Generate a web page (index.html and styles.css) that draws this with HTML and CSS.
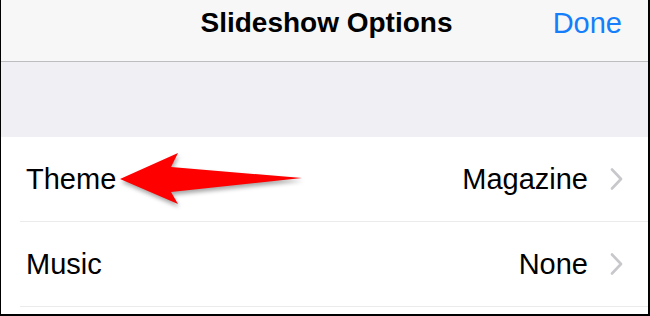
FILE: index.html
```html
<!DOCTYPE html>
<html>
<head>
<meta charset="utf-8">
<link rel="stylesheet" href="styles.css">
</head>
<body>
<div class="frame">
  <header class="nav">
    <div class="title">Slideshow Options</div>
    <div class="done">Done</div>
  </header>
  <div class="band"></div>
  <div class="list">
    <div class="row">
      <span class="label">Theme</span>
      <span class="value">Magazine</span>
      <svg class="chev" width="13" height="22" viewBox="0 0 13 22"><path d="M2 1.5 L11 11 L2 20.5" fill="none" stroke="#c7c7cc" stroke-width="2.6" stroke-linecap="round" stroke-linejoin="round"/></svg>
      <svg class="arrow" width="200" height="60" viewBox="0 0 200 60"><path d="M4 27 L62 1 L55 15 L186 26 L55 40 L62 52 Z" fill="#ff0000"/></svg>
    </div>
    <div class="row">
      <span class="label">Music</span>
      <span class="value">None</span>
      <svg class="chev" width="13" height="22" viewBox="0 0 13 22"><path d="M2 1.5 L11 11 L2 20.5" fill="none" stroke="#c7c7cc" stroke-width="2.6" stroke-linecap="round" stroke-linejoin="round"/></svg>
    </div>
  </div>
</div>
</body>
</html>
```
FILE: styles.css
```css
html, body {
  margin: 0;
  padding: 0;
  width: 650px;
  height: 316px;
  overflow: hidden;
  background: #fff;
}
.frame {
  box-sizing: border-box;
  width: 650px;
  height: 316px;
  border-left: 1px solid #000;
  border-right: 2px solid #000;
  border-bottom: 2px solid #000;
  font-family: "Liberation Sans", Arial, sans-serif;
  color: #000;
  display: flex;
  flex-direction: column;
  background: #fff;
}
.nav {
  height: 61px;
  border-bottom: 1px solid #bdbcc1;
  background: #f7f7f8;
  position: relative;
  flex: none;
}
.title {
  position: absolute;
  left: 0;
  right: 0;
  top: 7px;
  text-align: center;
  font-weight: bold;
  font-size: 28px;
  line-height: 32px;
  padding-left: 4px;
}
.done {
  position: absolute;
  right: 26px;
  top: 7px;
  font-size: 29px;
  line-height: 32px;
  color: #157efb;
}
.band {
  height: 75px;
  background: #efeff4;
  flex: none;
}
.list {
  background: #fff;
}
.row {
  position: relative;
  height: 84px;
  margin-left: 19px;
  padding-right: 25px;
  border-bottom: 1px solid #ebebed;
  display: flex;
  align-items: center;
  font-size: 29px;
}
.label {
  margin-left: 6px;
  flex: 1;
}
.value {
  margin-right: 22px;
}
.chev {
  display: block;
}
.arrow {
  position: absolute;
  left: 96px;
  top: 15px;
  filter: drop-shadow(1px 3px 2px rgba(0,0,0,0.35));
}
```
